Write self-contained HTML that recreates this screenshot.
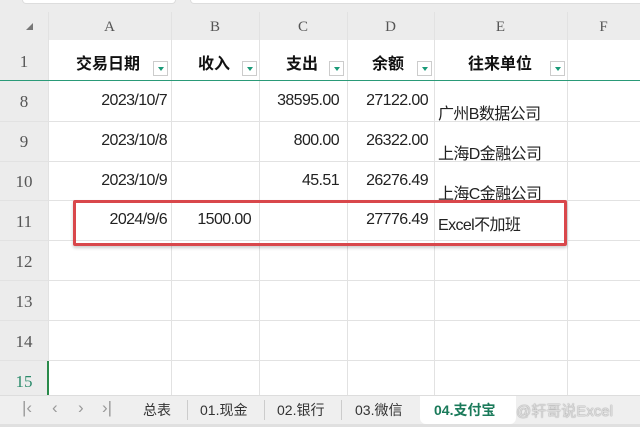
<!DOCTYPE html>
<html><head><meta charset="utf-8"><style>
*{margin:0;padding:0;box-sizing:border-box}
body{width:640px;height:427px;overflow:hidden;background:#fff;position:relative;font-family:"Liberation Sans","Noto Sans CJK SC",sans-serif;color:#222}
.a{position:absolute}
.hl{position:absolute;left:0;width:640px;height:1px;background:#e2e2e2}
.vl{position:absolute;top:12px;width:1px;height:383px;background:#e2e2e2}
.ch{position:absolute;top:14px;height:26px;line-height:26px;text-align:center;font-family:"Liberation Serif",serif;font-size:15px;color:#555}
.rh{position:absolute;left:0;width:48px;text-align:center;font-family:"Liberation Serif",serif;font-size:17px;color:#555}
.c{position:absolute;font-size:16px;white-space:nowrap;letter-spacing:-0.6px}
.r{text-align:right}
.h{position:absolute;top:50px;font-size:16px;font-weight:bold;color:#111}
.f{position:absolute;top:61px;width:15px;height:15px;border:1px solid #ccc;background:#fff}
.f:after{content:"";position:absolute;left:4px;top:5px;border-left:3px solid transparent;border-right:3px solid transparent;border-top:4px solid #1a9a78}
.t{position:absolute;top:400px;font-size:14px;color:#333}
.n{position:absolute;top:398px;font-size:17px;color:#999}
</style></head><body>
<div class="a" style="left:0;top:0;width:640px;height:40px;background:#ececec"></div>
<div class="a" style="left:22px;top:0;width:154px;height:4px;background:#fff;border:1px solid #ddd;border-top:none;border-radius:0 0 4px 4px"></div>
<div class="a" style="left:190px;top:0;width:460px;height:4px;background:#fff;border:1px solid #ddd;border-top:none;border-radius:0 0 0 4px"></div>
<div class="a" style="left:0;top:40px;width:48px;height:355px;background:#ececec"></div>
<div class="a" style="left:26px;top:23px;width:0;height:0;border-left:7px solid transparent;border-bottom:7px solid #777"></div>
<div class="vl" style="left:48px"></div><div class="vl" style="left:171px"></div><div class="vl" style="left:259px"></div><div class="vl" style="left:347px"></div><div class="vl" style="left:434px"></div><div class="vl" style="left:567px"></div>
<div class="hl" style="top:121px"></div><div class="hl" style="top:161px"></div><div class="hl" style="top:200px"></div><div class="hl" style="top:240px"></div><div class="hl" style="top:280px"></div><div class="hl" style="top:320px"></div><div class="hl" style="top:360px"></div>
<div class="a" style="left:0;top:80px;width:640px;height:1px;background:#2a9a78"></div>
<div class="ch" style="left:48px;width:123px">A</div><div class="ch" style="left:171px;width:88px">B</div><div class="ch" style="left:259px;width:88px">C</div><div class="ch" style="left:347px;width:87px">D</div><div class="ch" style="left:434px;width:133px">E</div><div class="ch" style="left:567px;width:73px">F</div>
<div class="rh" style="top:52px">1</div><div class="rh" style="top:92px">8</div><div class="rh" style="top:132px">9</div><div class="rh" style="top:172px">10</div><div class="rh" style="top:212px">11</div><div class="rh" style="top:252px">12</div><div class="rh" style="top:292px">13</div><div class="rh" style="top:332px">14</div><div class="rh" style="top:372px;color:#2a8a6a">15</div>
<div class="a" style="left:47px;top:361px;width:2px;height:34px;background:#2a8a4a"></div>
<div class="h" style="left:76px">交易日期</div><div class="f" style="left:153px"></div>
<div class="h" style="left:198px">收入</div><div class="f" style="left:242px"></div>
<div class="h" style="left:286px">支出</div><div class="f" style="left:329px"></div>
<div class="h" style="left:372px">余额</div><div class="f" style="left:417px"></div>
<div class="h" style="left:468px">往来单位</div><div class="f" style="left:550px"></div>
<div class="c r" style="right:473px;top:92px">2023/10/7</div><div class="c r" style="right:301px;top:92px">38595.00</div><div class="c r" style="right:212px;top:92px">27122.00</div><div class="c" style="left:438px;top:100px">广州B数据公司</div>
<div class="c r" style="right:473px;top:132px">2023/10/8</div><div class="c r" style="right:301px;top:132px">800.00</div><div class="c r" style="right:212px;top:132px">26322.00</div><div class="c" style="left:438px;top:140px">上海D金融公司</div>
<div class="c r" style="right:473px;top:172px">2023/10/9</div><div class="c r" style="right:301px;top:172px">45.51</div><div class="c r" style="right:212px;top:172px">26276.49</div><div class="c" style="left:438px;top:180px">上海C金融公司</div>
<div class="c r" style="right:473px;top:211px">2024/9/6</div><div class="c r" style="right:389px;top:211px">1500.00</div><div class="c r" style="right:212px;top:211px">27776.49</div><div class="c" style="left:438px;top:211px">Excel不加班</div>
<div class="a" style="left:73px;top:200px;width:494px;height:46px;border:3px solid #d9474b;border-radius:2px;box-shadow:0 2px 3px rgba(0,0,0,.2)"></div>
<div class="a" style="left:0;top:395px;width:640px;height:32px;background:#efefef;border-top:1px solid #ddd"></div>
<div class="a" style="left:0;top:424px;width:640px;height:3px;background:#e0e0e0"></div>
<div class="n" style="left:22px">|‹</div><div class="n" style="left:52px">‹</div><div class="n" style="left:78px">›</div><div class="n" style="left:102px">›|</div>
<div class="t" style="left:143px">总表</div>
<div class="a" style="left:187px;top:400px;width:1px;height:20px;background:#ccc"></div>
<div class="t" style="left:200px">01.现金</div>
<div class="a" style="left:264px;top:400px;width:1px;height:20px;background:#ccc"></div>
<div class="t" style="left:277px">02.银行</div>
<div class="a" style="left:341px;top:400px;width:1px;height:20px;background:#ccc"></div>
<div class="t" style="left:355px">03.微信</div>
<div class="a" style="left:420px;top:396px;width:96px;height:28px;background:#fff;border-radius:0 0 6px 6px"></div>
<div class="t" style="left:434px;color:#1a7a5a;font-weight:bold">04.支付宝</div>
<div class="t" style="left:516px;color:#ddd;font-size:15px;text-shadow:0 0 1px #666">@轩哥说Excel</div>
</body></html>
